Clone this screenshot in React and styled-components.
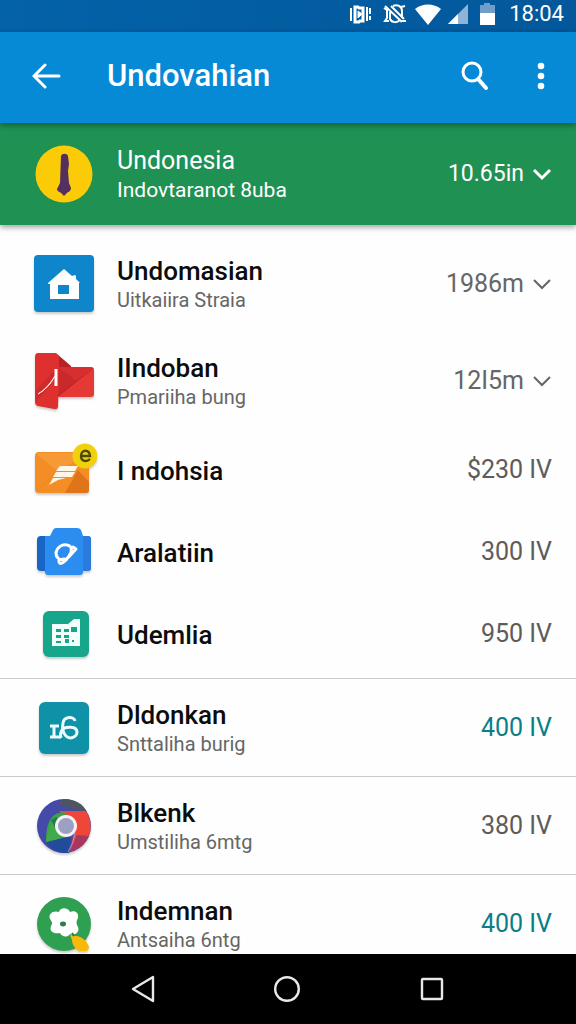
import React from 'react'
import styled, { createGlobalStyle } from 'styled-components'

const GlobalStyle = createGlobalStyle`
  * {
    box-sizing: border-box;
  }
  body {
    margin: 0;
    font-family: Roboto, "Liberation Sans", sans-serif;
    background-color: #fdfefd;
  }
`

const Screen = styled.div`
  display: flex;
  flex-direction: column;
  height: 100vh;
  overflow: hidden;
`
const StatusBar = styled.div`
  flex: none;
  display: flex;
  align-items: center;
  justify-content: flex-end;
  gap: 6px;
  height: 32px;
  padding: 0 12px 4px;
  color: white;
  background: linear-gradient(to right, #0462a8, #03589b);
`
const Time = styled.span`
  margin-left: 4px;
  font-size: 22px;
  line-height: 28px;
`
const IconButton = styled.button`
  display: flex;
  align-items: center;
  justify-content: center;
  padding: 0;
  border: none;
  background: none;
  color: inherit;
  cursor: pointer;
`
const AppBar = styled.header`
  position: relative;
  z-index: 2;
  flex: none;
  display: flex;
  align-items: center;
  height: 91px;
  padding: 0 31px 4px 32px;
  color: white;
  background-color: #078ad6;
  box-shadow: 0 2px 6px rgba(0, 0, 0, 0.4);
`
const AppTitle = styled.h1`
  flex: 1;
  margin: 0 0 0 46px;
  font-size: 31px;
  font-weight: 500;
  line-height: 40px;
`
const Actions = styled.div`
  display: flex;
  align-items: center;
  gap: 48px;
`

const Account = styled.section`
  position: relative;
  z-index: 1;
  flex: none;
  display: flex;
  align-items: center;
  height: 102px;
  padding: 0 24px 0 34px;
  color: white;
  background-color: #1f9153;
  box-shadow: 0 2px 6px rgba(0, 0, 0, 0.4);
`
const List = styled.ul`
  flex: 1;
  min-height: 0;
  margin: 0;
  padding: 10px 0 0;
  list-style: none;
  overflow-y: auto;
  scrollbar-width: none;
`
const Row = styled.li`
  display: flex;
  align-items: center;
  height: ${props => props.$single ? "82px" : "97px"};
  padding: 0 24px 0 34px;
`
const Divider = styled.li`
  height: 1px;
  margin-top: ${props => props.$spaced ? "3px" : "0"};
  background-color: #c9cccf;
`
const IconSlot = styled.div`
  flex: none;
  display: flex;
  justify-content: center;
  width: 60px;
  filter: ${props => props.$flat ? "none" : "drop-shadow(0 2px 1px rgba(0, 0, 0, 0.2))"};

  svg {
    flex: none;
  }
`
const Texts = styled.div`
  flex: 1;
  display: flex;
  flex-direction: column;
  padding: 2px 0 0 23px;
`
const Name = styled.span`
  font-size: ${props => props.$light ? "25px" : "26px"};
  font-weight: ${props => props.$light ? 400 : 500};
  line-height: 30px;
  color: ${props => props.$light ? "white" : "#0c0c0c"};
`
const Detail = styled.span`
  font-size: ${props => props.$light ? "21px" : "20px"};
  line-height: 28px;
  color: ${props => props.$light ? "white" : "#666"};
`
const Amount = styled.span`
  font-size: 25px;
  line-height: 32px;
  color: ${props => props.$accent ? "#0a7f8a" : "#5c5c5c"};
`
const AmountButton = styled.button`
  display: flex;
  align-items: center;
  gap: 8px;
  padding: 0;
  border: none;
  background: none;
  font-family: inherit;
  font-size: ${props => props.$light ? "23px" : "25px"};
  line-height: 32px;
  color: ${props => props.$light ? "white" : "#666"};
  cursor: pointer;
`

const NavBar = styled.nav`
  flex: none;
  display: flex;
  align-items: center;
  justify-content: center;
  gap: 117px;
  height: 70px;
  color: #e8e8e8;
  background-color: black;
`

const VibrateIcon = () => (
  <svg width="28" height="22" viewBox="-2 0 28 22" fill="none" stroke="currentColor" strokeWidth="2">
    <path d="M2 5v13M21 5v6M21 13v4" />
    <path d="M6 4h3l1 1h4v13h-3l-1 1H6z" strokeWidth="3" />
    <path d="M9 8l4 3-4 4z" fill="currentColor" strokeWidth="1" />
    <path d="M18 4v14" strokeWidth="2" />
  </svg>
)
const MutedIcon = () => (
  <svg width="28" height="22" viewBox="-2 0 28 22" fill="none" stroke="currentColor" strokeWidth="2">
    <path d="M2 3l17 16M8 3l13 13" />
    <path d="M4 6v9l-2 3h4M7 9v7c2 4 7 4 10 1M10 3c4-2 9 0 9 5v7" />
    <path d="M18 4l4-1M19 18h4M1 5l3 2" />
  </svg>
)
const WifiIcon = () => (
  <svg width="26" height="22" viewBox="0 0 26 22">
    <path d="M13 22L0 6C7 0 19 0 26 6z" fill="currentColor" />
  </svg>
)
const SignalIcon = () => (
  <svg width="22" height="22" viewBox="0 0 22 22">
    <path d="M1 21L21 1v20z" fill="#8fb4d6" />
    <path d="M1 21l10-10v10z" fill="currentColor" />
  </svg>
)
const BatteryIcon = () => (
  <svg width="24" height="24" viewBox="0 0 24 24">
    <path d="M5 3h4V1h6v2h5v9H5z" fill="#6f9fc9" />
    <path d="M5 11h15v12H5z" fill="currentColor" />
  </svg>
)
const BackIcon = () => (
  <svg width="29" height="28" viewBox="0 0 29 28" fill="none" stroke="currentColor" strokeWidth="3" strokeLinecap="round">
    <path d="M13 3L2 14l11 11M3 14h24" />
  </svg>
)
const SearchIcon = () => (
  <svg width="28" height="30" viewBox="0 0 28 30" fill="none" stroke="currentColor" strokeLinecap="round">
    <circle cx="11" cy="11" r="9" strokeWidth="3" />
    <path d="M18 19l7 8" strokeWidth="4" />
  </svg>
)
const MoreIcon = () => (
  <svg width="8" height="28" viewBox="0 0 8 28" fill="currentColor">
    <circle cx="4" cy="4" r="3.3" />
    <circle cx="4" cy="14" r="3.3" />
    <circle cx="4" cy="24" r="3.3" />
  </svg>
)
const ChevronIcon = ({ bold }) => (
  <svg width="20" height="14" viewBox="0 0 20 14" fill="none" stroke="currentColor" strokeWidth={bold ? 3 : 2}>
    <path d="M2 3l8 8 8-8" />
  </svg>
)

const AccountIcon = () => (
  <svg width="58" height="58" viewBox="0 0 58 58">
    <circle cx="29" cy="29" r="28.5" fill="#fccb08" />
    <path d="M26 11c1-3 6-3 7 0l1 8-1 7 1 12 2 5c0 4-4 4-5 6l-2 2-2-2c-1-2-5-2-5-5l3-6z" fill="#53305f" />
  </svg>
)
const HouseIcon = () => (
  <svg width="60" height="58" viewBox="0 0 60 58">
    <rect width="60" height="57" rx="4" fill="#0f86cb" />
    <path d="M14 28L30 14l8 7 3-1 1 1v3l4 4h-1v16H16V29h-2z" fill="white" />
    <rect x="24" y="30" width="11" height="9" fill="#0f86cb" />
  </svg>
)
const MailIcon = () => (
  <svg width="60" height="58" viewBox="0 0 60 58">
    <path d="M20 1l3 1 14 12v8H20z" fill="#b92225" />
    <path d="M22 15h35q3 0 3 3v24q0 3-3 3H22z" fill="#e53935" />
    <path d="M24 15h34L43 29z" fill="#d5302f" />
    <path d="M24 15l19 14-9 8-10 7z" fill="#c9292b" />
    <path d="M43 29l16-13M24 44l19-15" fill="none" stroke="#b92225" />
    <path d="M4 1h18l3 3v20l-1 31q-1 3-4 2L4 54q-3-1-3-4V5q0-4 3-4z" fill="#df3030" />
    <path d="M21 28L2 50V38l19-20z" fill="#d02a2c" />
    <path d="M4 42q9-5 17-18-6 12-17 18z" fill="white" stroke="#ffe4dc" />
    <path d="M22 17v17" stroke="white" strokeWidth="3" />
  </svg>
)
const LetterIcon = () => (
  <svg width="66" height="54" viewBox="0 0 66 54">
    <rect x="4" y="9" width="54" height="41" rx="4" fill="#f48d25" />
    <path d="M5 11l22 17L57 10H8z" fill="#f79a35" />
    <path d="M34 50l13-23 11 12v8q0 3-3 3z" fill="#df741a" />
    <path d="M5 49l20-20" stroke="#e58a2c" />
    <path d="M29 23h18l-3 5H25zM25 29h19l-3 5H22zM22 35h13l-8 2-9 5z" fill="#fff6e8" />
    <circle cx="54" cy="13" r="12.5" fill="#f1d10b" />
    <path d="M50 13h9c0-7-9-7-9 0 0 6 6 6 9 3" fill="none" stroke="#4b4708" strokeWidth="2.4" />
  </svg>
)
const CaseIcon = () => (
  <svg width="56" height="50" viewBox="0 0 56 50">
    <rect x="1" y="9" width="54" height="35" rx="4" fill="#1765c4" />
    <path d="M46 9h6q3 0 3 3v29q0 3-3 3h-6z" fill="#2a7bdc" />
    <path d="M9 9h5l3-6q1-2 3-2h21q3 0 4 2l2 6v36q0 3-3 3H12q-3 0-3-3z" fill="#2c8df0" />
    <path d="M28 32c-5 2-8-2-8-6 1-6 6-9 11-8 6 1 5 7 2 11-3 5-9 10-10 6-1-3 4-3 7-3 4-2 6-6 10-10l-3-2" fill="none" stroke="white" strokeWidth="3" strokeLinecap="round" strokeLinejoin="round" />
  </svg>
)
const TableIcon = () => (
  <svg width="50" height="46" viewBox="-4 0 50 46">
    <rect width="46" height="46" rx="6" fill="#17a58c" />
    <path d="M9 13h16l6-5h6v27H9z" fill="#f2fffb" />
    <path d="M13 18h5v3h-5zM21 18h5v3h-5zM28 16h6v5h-6zM13 24h5v3h-5zM21 24h5v3h-5zM13 30h5v2h-5zM22 28h4v4h-4zM29 29h2v2h-2z" fill="#17a58c" />
  </svg>
)
const LettersIcon = () => (
  <svg width="52" height="54" viewBox="0 0 52 54">
    <rect x="1" y="1" width="50" height="52" rx="6" fill="#0f91a8" />
    <path d="M12 25h9M16 24v13M12 36h11" fill="none" stroke="#eafcff" strokeWidth="3" />
    <path d="M37 20c-1-5-11-5-12 2-1 5 0 10 3 13 4 4 11 1 11-4 0-6-12-6-15-2-2 3-2 5-1 8" fill="none" stroke="#eafcff" strokeWidth="3" />
  </svg>
)
const BrowserIcon = () => (
  <svg width="54" height="54" viewBox="0 0 54 54">
    <circle cx="27" cy="27" r="27" fill="#454aa8" />
    <path d="M27 0c11 0 19 5 23 13L35 10 21 5z" fill="#4d5563" />
    <path d="M9 43l25-6-2 17c-10 1-18-3-23-11z" fill="#234a9b" />
    <path d="M22 12h27c10 16 3 32-11 39l-5 1 5-24z" fill="#ee4637" />
    <path d="M33 52l7-16 12 1c-4 8-10 14-19 15z" fill="#a9365e" />
    <path d="M9 43c0-10 1-20 7-26 4-4 9-4 14-3l-8 20 8 4z" fill="#36a34a" />
    <path d="M14 22l10 17-15 4z" fill="#43aa4b" />
    <path d="M14 21l6 11V18z" fill="#237e48" />
    <path d="M38 34q-1 10-7 19" stroke="#8a9bd8" fill="none" />
    <circle cx="29" cy="27" r="11" fill="#f8f1f4" />
    <circle cx="29" cy="27" r="8" fill="#9da0c5" />
  </svg>
)
const FlowerIcon = () => (
  <svg width="54" height="54" viewBox="0 0 54 54">
    <circle cx="27" cy="27" r="27" fill="#2fa052" />
    <path d="M22 15c1-5 9-5 11 0 5-2 9 1 8 6-2 4-2 5 0 9 2 5-3 9-8 7-3 4-8 3-10-1-6 1-11-1-9-7 2-3 1-4-1-7-2-5 3-9 9-7z" fill="white" />
    <ellipse cx="26" cy="27" rx="3" ry="2.4" fill="#2b7f45" />
    <path d="M33 38l6 1c6 0 13 7 13 12l-3 4c-7 1-14-5-14-12z" fill="#f8b90b" />
    <path d="M35 36l2 3" stroke="#237e48" strokeWidth="2" />
  </svg>
)

const BackKeyIcon = () => (
  <svg width="26" height="28" viewBox="0 0 26 28" fill="none" stroke="currentColor" strokeWidth="2.4" strokeLinejoin="round">
    <path d="M23 2v24L3 14z" />
  </svg>
)
const HomeKeyIcon = () => (
  <svg width="28" height="28" viewBox="0 0 28 28" fill="none" stroke="currentColor" strokeWidth="2.4">
    <circle cx="14" cy="14" r="11.8" />
  </svg>
)
const RecentKeyIcon = () => (
  <svg width="28" height="28" viewBox="0 0 28 28" fill="none" stroke="currentColor" strokeWidth="2.4">
    <rect x="4" y="4" width="20" height="20" rx="1" />
  </svg>
)

const items = [
  { name: "Undomasian", detail: "Uitkaiira Straia", amount: "1986m", expandable: true, Icon: HouseIcon },
  { name: "IIndoban", detail: "Pmariiha bung", amount: "12I5m", expandable: true, Icon: MailIcon },
  { name: "I ndohsia", amount: "$230 IV", Icon: LetterIcon },
  { name: "Aralatiin", amount: "300 IV", Icon: CaseIcon },
  { name: "Udemlia", amount: "950 IV", Icon: TableIcon },
  { name: "Dldonkan", detail: "Snttaliha burig", amount: "400 IV", accent: true, divided: true, Icon: LettersIcon },
  { name: "Blkenk", detail: "Umstiliha 6mtg", amount: "380 IV", divided: true, Icon: BrowserIcon },
  { name: "Indemnan", detail: "Antsaiha 6ntg", amount: "400 IV", accent: true, divided: true, Icon: FlowerIcon },
]

const App = () => {
  return (
    <Screen>
      <GlobalStyle />
      <StatusBar>
        <VibrateIcon />
        <MutedIcon />
        <WifiIcon />
        <SignalIcon />
        <BatteryIcon />
        <Time>18:04</Time>
      </StatusBar>
      <AppBar>
        <IconButton aria-label="Back"><BackIcon /></IconButton>
        <AppTitle>Undovahian</AppTitle>
        <Actions>
          <IconButton aria-label="Search"><SearchIcon /></IconButton>
          <IconButton aria-label="More"><MoreIcon /></IconButton>
        </Actions>
      </AppBar>
      <Account>
        <IconSlot $flat><AccountIcon /></IconSlot>
        <Texts>
          <Name $light>Undonesia</Name>
          <Detail $light>Indovtaranot 8uba</Detail>
        </Texts>
        <AmountButton $light>10.65in <ChevronIcon bold /></AmountButton>
      </Account>
      <List>
        {items.map(({ name, detail, amount, accent, expandable, divided, Icon }, i) => (
          <React.Fragment key={name}>
            {divided && <Divider role="separator" $spaced={!items[i - 1].detail} />}
            <Row $single={!detail}>
              <IconSlot><Icon /></IconSlot>
              <Texts>
                <Name>{name}</Name>
                {detail && <Detail>{detail}</Detail>}
              </Texts>
              {expandable
                ? <AmountButton>{amount} <ChevronIcon /></AmountButton>
                : <Amount $accent={accent}>{amount}</Amount>}
            </Row>
          </React.Fragment>
        ))}
      </List>
      <NavBar>
        <IconButton aria-label="Back key"><BackKeyIcon /></IconButton>
        <IconButton aria-label="Home"><HomeKeyIcon /></IconButton>
        <IconButton aria-label="Recent apps"><RecentKeyIcon /></IconButton>
      </NavBar>
    </Screen>
  )
}

export default App
